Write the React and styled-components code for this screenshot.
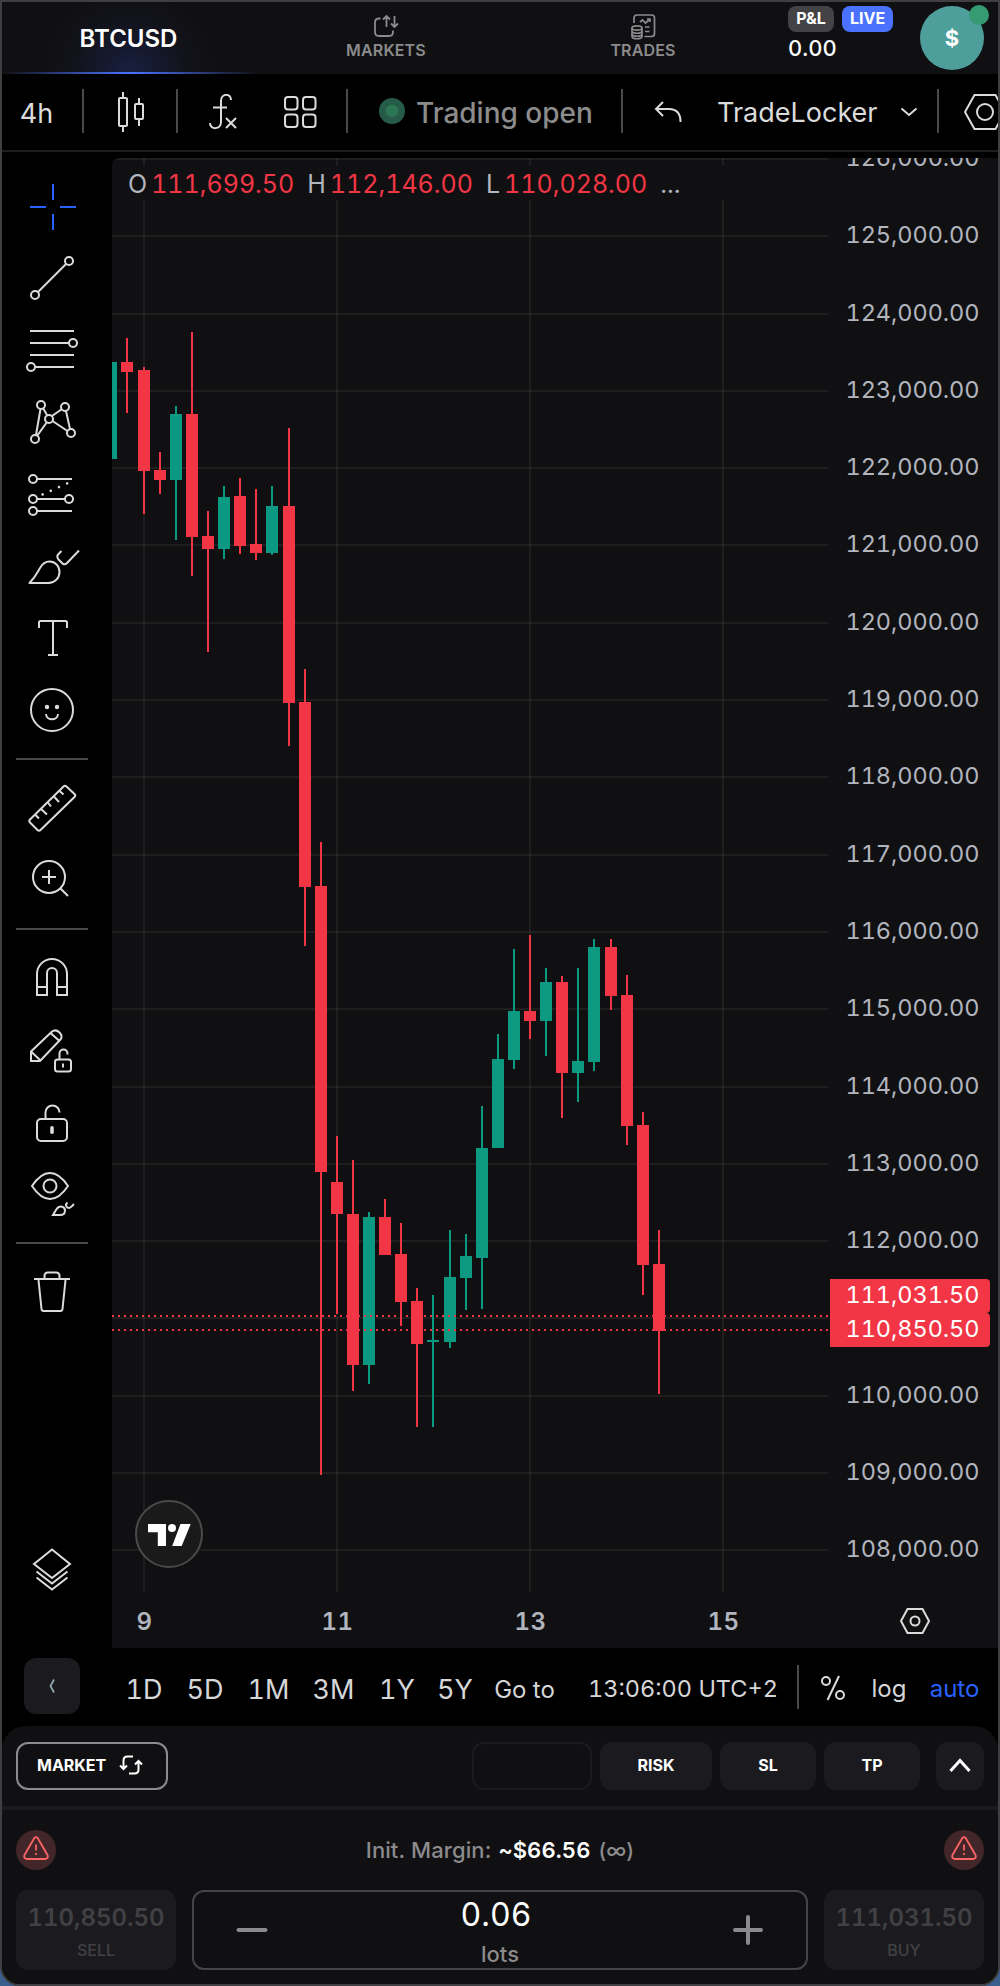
import styled, { createGlobalStyle } from "styled-components"

const GlobalStyle = createGlobalStyle`
    * {
        box-sizing: border-box;
    }
    body {
        margin: 0;
        background: #3b5f8f;
        font-family: Inter, "Liberation Sans", sans-serif;
        -webkit-font-smoothing: antialiased;
    }
    svg {
        display: block;
        flex-shrink: 0;
    }
`

const Frame = styled.div`
    display: flex;
    flex-direction: column;
    width: 1000px;
    height: 1986px;
    overflow: hidden;
    border: 2px solid #3f3f41;
    border-radius: 0 0 20px 20px;
    background: #000;
    color: #dbdbdb;
`

/* ---------- header ---------- */

const Header = styled.header`
    display: flex;
    height: 72px;
    background: #101012;
`

const Tab = styled.div`
    display: flex;
    flex-direction: column;
    align-items: center;
    width: 256px;
    padding-top: 11px;
    padding-left: ${props => props.$start || 0}px;
    color: #8b8b8d;
    font-size: 16px;
    font-weight: 600;
    line-height: 20px;
    letter-spacing: 0.15px;
`

const ActiveTab = styled(Tab)`
    justify-content: center;
    padding: 2px 3px 0 0;
    color: #fff;
    font-size: 24px;
    letter-spacing: 0;
    background:
        linear-gradient(90deg, transparent, #4a72ff 50%, transparent) bottom / 100% 2px no-repeat,
        radial-gradient(circle at 50% 100%, rgba(60, 92, 255, 0.2), rgba(60, 92, 255, 0.04) 55px, transparent 85px);
`

const Pnl = styled.div`
    width: 132px;
    margin-left: 18px;
    padding-top: 4px;
`

const Pills = styled.div`
    display: flex;
    gap: 8px;
`

const Pill = styled.span`
    width: ${props => props.$width}px;
    height: 26px;
    border-radius: 8px;
    background: ${props => props.$bg};
    color: #fff;
    font-size: 16px;
    font-weight: 700;
    line-height: 25px;
    text-align: center;
`

const PnlValue = styled.div`
    color: #fff;
    font-size: 22px;
    font-weight: 500;
    line-height: 33px;
    font-variant-numeric: tabular-nums;
`

const Avatar = styled.div`
    position: relative;
    width: 64px;
    height: 64px;
    margin-top: 4px;
    border-radius: 50%;
    background: #4e9e9c;
    color: #fff;
    font-size: 22px;
    font-weight: 700;
    line-height: 64px;
    text-align: center;
    &::after {
        content: "";
        position: absolute;
        top: -1px;
        right: -5px;
        width: 20px;
        height: 20px;
        border-radius: 50%;
        background: #369a73;
    }
`

/* ---------- chart toolbar ---------- */

const Toolbar = styled.div`
    display: flex;
    align-items: center;
    height: 78px;
    padding-bottom: 2px;
    border-bottom: 2px solid #1d1d20;
    font-size: 27px;
    > * {
        flex-shrink: 0;
    }
`

const Tool = styled.div`
    display: flex;
    justify-content: center;
    align-items: center;
    width: ${props => props.$width}px;
    height: 46px;
    padding-top: ${props => props.$top || 2}px;
    padding-right: ${props => props.$end || 0}px;
    padding-left: ${props => props.$start || 0}px;
`

const Divider = styled.div`
    width: 2px;
    height: 44px;
    background: #4a4a4a;
`

const Status = styled.div`
    display: flex;
    align-items: center;
    gap: 11px;
    width: 273px;
    padding-left: 31px;
    color: #8c8c8c;
    font-size: 28px;
    font-weight: 500;
    white-space: nowrap;
    span {
        padding-top: 4px;
    }
`

const StatusDot = styled.i`
    width: 26px;
    height: 26px;
    border-radius: 50%;
    background: radial-gradient(circle, #2c7656 6px, #265c47 6.5px);
`

const Broker = styled.div`
    display: flex;
    align-items: center;
    justify-content: space-between;
    width: 224px;
    padding: 3px 19px 0 4px;
    font-size: 27px;
    svg {
        margin-bottom: 2px;
    }
`

const Settings = styled.div`
    padding: 1px 0 0 25px;
`

/* ---------- middle ---------- */

const Main = styled.div`
    display: flex;
    height: 1496px;
`

const Sidebar = styled.aside`
    display: flex;
    flex-direction: column;
    width: 110px;
    padding: 18px 0 42px 14px;
`

const SidebarRule = styled.hr`
    width: 72px;
    height: 2px;
    margin: 12px 0;
    border: 0;
    background: #4a4a4a;
`

const IconSvg = styled.svg`
    width: 72px;
    height: 72px;
    fill: none;
    stroke: ${props => props.$color || "#dbdbdb"};
    stroke-width: 2;
    margin-top: ${props => (props.$last ? "auto" : 0)};
`

const ChartArea = styled.section`
    position: relative;
    width: 886px;
    height: 1490px;
    margin-top: 6px;
    overflow: hidden;
    border-top-left-radius: 8px;
    background: #101012;
    font-variant-numeric: tabular-nums;
`

const Legend = styled.div`
    position: absolute;
    top: 8px;
    left: 12px;
    display: flex;
    width: 690px;
    height: 34px;
    padding-left: 4px;
    background: #101012;
    color: #b2b5be;
    font-size: 25px;
    line-height: 36px;
    white-space: pre;
    b {
        color: #f23645;
        font-weight: 400;
        margin: 0 13px 0 4px;
    }
`

/* ---------- range bar ---------- */

const RangeBar = styled.div`
    display: flex;
    align-items: center;
    height: 78px;
    padding: 0 0 0 22px;
`

const Collapse = styled.div`
    display: flex;
    justify-content: center;
    align-items: center;
    width: 56px;
    height: 56px;
    margin: 0 32px 2px 0;
    border-radius: 12px;
    background: #1b1b1f;
`

const Range = styled.div`
    width: ${props => props.$width}px;
    padding-top: ${props => props.$top || 0}px;
    color: ${props => (props.$active ? "#2962ff" : "#d6d6d8")};
    font-size: ${props => props.$size || 24}px;
    line-height: 40px;
    text-align: center;
    white-space: nowrap;
    font-variant-numeric: tabular-nums;
    svg {
        margin: 0 auto;
    }
`

/* ---------- order panel ---------- */

const Panel = styled.div`
    flex: 1;
    border-radius: 24px 24px 0 0;
    background: #101012;
`

const OrderRow = styled.div`
    display: flex;
    align-items: center;
    gap: 8px;
    height: 84px;
    padding: 0 14px;
    border-bottom: 4px solid #1b1b1f;
`

const OrderType = styled.button`
    display: flex;
    align-items: center;
    gap: 13px;
    width: 152px;
    height: 48px;
    margin-right: auto;
    padding: 0 0 2px 19px;
    border: 2px solid #8c8c8e;
    border-radius: 12px;
    background: none;
    color: #fff;
    font: 700 16px Inter, sans-serif;
`

const Chip = styled.button`
    display: flex;
    justify-content: center;
    align-items: center;
    width: ${props => props.$width}px;
    height: 48px;
    margin-left: ${props => (props.$gap ? 8 : 0)}px;
    padding: 0 0 2px;
    border: 2px solid #1b1b1f;
    border-radius: 12px;
    background: ${props => (props.$empty ? "none" : "#1b1b1f")};
    color: #fff;
    font: 700 16px Inter, sans-serif;
`

const MarginRow = styled.div`
    display: flex;
    justify-content: space-between;
    align-items: center;
    height: 80px;
    padding: 0 14px;
`

const Warning = styled.div`
    display: flex;
    justify-content: center;
    align-items: center;
    width: 40px;
    height: 40px;
    padding-bottom: 4px;
    border-radius: 50%;
    background: #432629;
`

const MarginText = styled.p`
    margin: 0;
    color: #8b8b8d;
    font-size: 22px;
    font-weight: 500;
    letter-spacing: 0.1px;
    white-space: pre;
    b {
        margin-left: 1px;
        color: #fff;
        font-weight: 600;
        font-variant-numeric: tabular-nums;
    }
    small {
        margin-left: 2px;
        font-size: 21px;
    }
`

const TradeRow = styled.div`
    display: flex;
    gap: 16px;
    padding: 0 14px;
`

const SideButton = styled.button`
    display: flex;
    flex-direction: column;
    align-items: center;
    width: 160px;
    height: 80px;
    padding: 12px 0 0;
    border: 0;
    border-radius: 12px;
    background: #1b1b1f;
    color: #414143;
    font: 600 24px/31px Inter, sans-serif;
    font-variant-numeric: tabular-nums;
    small {
        font-size: 16px;
        font-weight: 500;
        line-height: 35px;
    }
`

const Lots = styled.div`
    display: flex;
    justify-content: space-between;
    align-items: center;
    flex: 1;
    height: 80px;
    padding: 0 42px;
    border: 2px solid #454547;
    border-radius: 12px;
`

const LotsValue = styled.div`
    display: flex;
    flex-direction: column;
    align-items: center;
    padding-top: 6px;
    color: #fff;
    font-size: 32px;
    line-height: 44px;
    font-variant-numeric: tabular-nums;
    span {
        margin-right: 8px;
    }
    small {
        margin-top: -2px;
        color: #8b8b8d;
        font-size: 22px;
        font-weight: 500;
        line-height: 38px;
    }
`

const Dots = ({ points }) => points.map(([x, y]) => <circle key={`${x}-${y}`} cx={x} cy={y} r="4" />)

const TOOLS = [
    { id: "cross", color: "#2962ff", draw: <path d="M37 14v16M37 44v16M14 37h16M44 37h16" /> },
    {
        id: "trend",
        draw: <><path d="M22 50l28-28" /><Dots points={[[53, 19], [19, 53]]} /></>,
    },
    {
        id: "fib",
        draw: <><path d="M14 17h44M14 29h39M14 41h44M19 53h39" /><Dots points={[[57, 29], [15, 53]]} /></>,
    },
    {
        id: "pattern",
        draw: <>
            <path d="M24.500 23L20 49M27 22l4 7M36 30l10-7M31 36L21 50M36.500 35l15 10M50 25l4 18" />
            <Dots points={[[25, 19], [49, 21], [33, 33], [19, 53], [55, 47]]} />
        </>,
    },
    {
        id: "forecast",
        draw: <>
            <path d="M21 21h35M21 41h28M21 53h35" />
            <path d="M26.500 36.500L53 24.500" strokeWidth="2.600" strokeLinecap="round" strokeDasharray="0.100 8.900" />
            <Dots points={[[17, 21], [17, 41], [53, 41], [17, 53]]} />
        </>,
    },
    {
        id: "brush",
        draw: <>
            <path d="M13.500 53C20 46 21 43 24 38c2.500-4.500 5.500-6.500 9.500-6.500 6 0 10 4.700 10 10.500s-4.500 11-11 11z" strokeLinejoin="round" />
            <path d="M45.500 21l-3 3c-1.500 1.500-1.500 3.500 0 5.500l3.500 3.500c1.500 1.500 3.500 1.500 5 0L63 20.500" />
        </>,
    },
    { id: "text", draw: <path d="M23 26v-5.500q0-1.500 1.500-1.500h25q1.500 0 1.500 1.500V26M37 19v34M32 53h10" /> },
    {
        id: "smile",
        draw: <>
            <circle cx="36" cy="36" r="21" />
            <path d="M30 40c.5 7 11.500 7 12 0" />
            <g fill="#dbdbdb" stroke="none"><circle cx="31" cy="33" r="2.200" /><circle cx="41" cy="33" r="2.200" /></g>
        </>,
    },
    null,
    {
        id: "ruler",
        draw: <>
            <path d="M47.500 14.500q1.500-1.500 3 0l8 7.500q1.500 1.500 0 3L24.500 58q-1.500 1.500-3 0L14 50.500q-1.500-1.500 0-3z" />
            <path d="M43 18.500l4.500 4M37.500 24l5.500 6M31.500 30l3.500 4.500M24.500 36.500l6.500 6M19 42.500l4 4" />
        </>,
    },
    { id: "zoom", draw: <><circle cx="33" cy="33" r="16" /><path d="M26 33h14M33 26v14M44.500 44.500l7.500 7.500" /></> },
    null,
    { id: "magnet", draw: <path d="M21 53V32a15 15 0 0 1 30 0v21H41V31a5 5 0 0 0-10 0v22zM21 45h10M41 45h10" /> },
    {
        id: "pencil-lock",
        draw: <>
            <path d="M15 47V37.500L35.500 18q4-3.500 8 0.500 4 4 0.500 7.500L24 47zM15 37.500l9 8.500M35 19.500l8.500 7.500" />
            <rect x="39" y="45.500" width="16" height="12" rx="2.500" />
            <path d="M43.500 45v-5.500a4 4 0 0 1 8 0v1M47 49.500v4" />
        </>,
    },
    {
        id: "lock",
        draw: <>
            <rect x="21" y="33" width="30" height="22" rx="4" />
            <path d="M29.500 33v-6.500a7 7 0 0 1 14 0" />
            <rect x="34.200" y="40" width="3.600" height="8" rx="1.800" fill="#dbdbdb" stroke="none" />
        </>,
    },
    {
        id: "eye",
        draw: <>
            <path d="M16 28c6-9 12-13 18-13s12 4 18 13c-6 9-12 13-18 13s-12-4-18-13z" />
            <circle cx="34" cy="28" r="6.500" />
            <path d="M37 57c2-3 2.500-4.500 4-6.500 3-3.500 8-2 8 2 0 3-2 4.500-5 4.500zM51.500 44.500c-3 2.500-1 5.500 1.500 5.500 2 0 2.500-1.500 5-4" />
        </>,
    },
    null,
    {
        id: "trash",
        draw: <path d="M18 23h36M28.500 23v-3q0-3.500 3.500-3.500h8q3.500 0 3.500 3.500v3M22.500 24l3 29q.2 2 2 2h17q1.800 0 2-2l3-29" />,
    },
]

// one grid line per 1000 points
const PRICES = [
    [126, 159], [125, 236], [124, 314], [123, 391], [122, 468], [121, 545], [120, 623], [119, 700], [118, 777],
    [117, 855], [116, 932], [115, 1009], [114, 1087], [113, 1164], [112, 1241], [111, 1318], [110, 1396],
    [109, 1473], [108, 1550],
]

const DAYS = [[9, 144], [11, 337], [13, 530], [15, 723]]

// x, high, body top, body bottom, low, rising
const CANDLES = [
    [111, 362, 362, 459, 459, 1],
    [127, 338, 362, 372, 413],
    [144, 367, 370, 471, 514],
    [160, 452, 470, 480, 494],
    [176, 406, 414, 480, 540, 1],
    [192, 332, 414, 537, 576],
    [208, 511, 536, 549, 652],
    [224, 486, 497, 549, 559, 1],
    [240, 478, 496, 546, 554],
    [256, 489, 544, 553, 560],
    [272, 486, 506, 553, 555, 1],
    [289, 428, 506, 703, 746],
    [305, 669, 702, 887, 946],
    [321, 842, 886, 1172, 1475],
    [337, 1136, 1182, 1214, 1314],
    [353, 1160, 1214, 1365, 1391],
    [369, 1212, 1217, 1365, 1384, 1],
    [385, 1199, 1217, 1255, 1255],
    [401, 1223, 1254, 1302, 1326],
    [417, 1288, 1301, 1344, 1427],
    [433, 1295, 1340, 1342, 1427, 1],
    [450, 1230, 1277, 1342, 1348, 1],
    [466, 1234, 1256, 1278, 1310, 1],
    [482, 1106, 1148, 1258, 1309, 1],
    [498, 1034, 1059, 1148, 1148, 1],
    [514, 949, 1011, 1060, 1069, 1],
    [530, 935, 1011, 1021, 1039],
    [546, 968, 982, 1021, 1056, 1],
    [562, 976, 982, 1073, 1118],
    [578, 968, 1061, 1073, 1102, 1],
    [594, 939, 947, 1062, 1071, 1],
    [611, 939, 947, 996, 1010],
    [627, 975, 995, 1126, 1145],
    [643, 1112, 1125, 1265, 1295],
    [659, 1230, 1264, 1331, 1394],
]

const Chart = () => (
    <svg width="886" height="1490" viewBox="112 158 886 1490" fontSize="24">
        <g stroke="#fff" strokeOpacity="0.06" strokeWidth="2">
            {PRICES.map(([price, y]) => <path key={price} d={`M112 ${y}H828`} />)}
            {DAYS.map(([day, x]) => <path key={day} d={`M${x} 158V1592`} />)}
        </g>
        {CANDLES.map(([x, high, top, bottom, low, up]) => (
            <g key={x} fill={up ? "#0c9981" : "#f23645"}>
                <rect x={x - 1} y={high} width="2" height={low - high} />
                <rect x={x - 6} y={top} width="12" height={bottom - top} />
            </g>
        ))}
        <path d="M112 1316H828M112 1330H828" stroke="#f23645" strokeWidth="2" strokeDasharray="2 4" />
        <g fill="#b2b5be" fontSize="23.500" textAnchor="end">
            {PRICES.filter(([price]) => price !== 111).map(([price, y]) => (
                <text key={price} x="979.500" y={y + 7} textLength="134">{price},000.00</text>
            ))}
        </g>
        <path d="M830 1279h156q4 0 4 4v26q0 4-4 4 4 0 4 4v26q0 4-4 4H830z" fill="#f23645" />
        <g fill="#fff" fontSize="23.500" textAnchor="end">
            <text x="979.500" y="1303" textLength="134">111,031.50</text>
            <text x="979.500" y="1337" textLength="134">110,850.50</text>
        </g>
        <g fill="#b2b5be" fontWeight="600" letterSpacing="0.500" textAnchor="middle">
            {DAYS.map(([day, x]) => <text key={day} x={x + 0.5} y="1630">{day}</text>)}
        </g>
        <g fill="none" stroke="#dbdbdb" strokeWidth="2">
            <path d="M907.500 1609h15l6.500 12-6.500 12h-15l-6.500-12z" />
            <circle cx="915" cy="1621" r="4.500" />
        </g>
        <circle cx="169" cy="1534" r="33" fill="#1a1a1b" stroke="#4a4a4a" strokeWidth="2" />
        <g fill="#fff">
            <path d="M148 1524h18v22h-8.200v-13.700H148zM180.500 1524h10.200l-9 22h-9.500z" />
            <circle cx="172" cy="1528" r="4" />
        </g>
    </svg>
)

const WarningIcon = () => (
    <Warning>
        <svg width="26" height="24" viewBox="0 0 26 24" fill="none" stroke="#ff6464" strokeWidth="1.800">
            <path d="M11.200 2.200Q13 0 14.800 2.200L24.500 19q1.200 3.500-2.500 4H4q-3.700-.5-2.500-4z" strokeLinejoin="round" />
            <path d="M13 8.500v6M13 17v2" />
        </svg>
    </Warning>
)

const App = () => {
    return <Frame>
        <GlobalStyle />
        <Header>
            <ActiveTab>BTCUSD</ActiveTab>
            <Tab>
                <svg width="26" height="27" viewBox="0 0 26 27" fill="none" stroke="#8b8b8d" strokeWidth="1.800">
                    <path d="M7.500 5.500H6q-4 0-4 4V19q0 4 4 4h10q4 0 4-4v-1.500M13.500 14V3.500M10 6.500L13.500 3 17 6.500M21.500 3v10.500M18 10.500l3.500 3.500 3.500-3.500" />
                </svg>
                MARKETS
            </Tab>
            <Tab $start={2}>
                <svg width="26" height="27" viewBox="0 0 26 27" fill="none" stroke="#8b8b8d" strokeWidth="1.700">
                    <path d="M4 10V5q0-3 3-3h14.500q3 0 3 3v15.500q0 3-3 3H14.500" />
                    <path d="M10 9l2.500-2 3 3 4-3.500M17 6h3v3M15 14h4.500M15 18.500h4.500" />
                    <ellipse cx="7" cy="15" rx="5" ry="2.200" />
                    <path d="M2 15v8.500c0 3 10 3 10 0V15M2 18c0 3 10 3 10 0M2 21c0 3 10 3 10 0" />
                </svg>
                TRADES
            </Tab>
            <Pnl>
                <Pills>
                    <Pill $width={46} $bg="#434345">P&amp;L</Pill>
                    <Pill $width={51} $bg="#4a72ff">LIVE</Pill>
                </Pills>
                <PnlValue>0.00</PnlValue>
            </Pnl>
            <Avatar>$</Avatar>
        </Header>

        <Toolbar>
            <Tool $width={80} $end={11} $top={4}>4h</Tool>
            <Divider />
            <Tool $width={92} $start={2}>
                <svg width="26" height="40" viewBox="0 0 26 40" fill="none" stroke="#dbdbdb" strokeWidth="2">
                    <path d="M5 0v6M5 34v6M21 6v6M21 28v6" />
                    <rect x="1" y="6" width="8" height="28" rx="1" />
                    <rect x="17" y="12" width="8" height="15" rx="1" />
                </svg>
            </Tool>
            <Divider />
            <Tool $width={90}>
                <svg width="28" height="36" viewBox="0 0 28 36" fill="none" stroke="#dbdbdb" strokeWidth="2">
                    <path d="M22 6c0-7-10-7-10 1v21c0 8-11 8-11 1M4 13.500h14M17 24l10 10M27 24L17 34" />
                </svg>
            </Tool>
            <Tool $width={78} $end={14}>
                <svg width="34" height="34" viewBox="0 0 34 34" fill="none" stroke="#dbdbdb" strokeWidth="2">
                    <rect x="2" y="2" width="12.500" height="12.500" rx="3" />
                    <rect x="20" y="2" width="12.500" height="12.500" rx="3" />
                    <rect x="2" y="19.500" width="12.500" height="12.500" rx="3" />
                    <rect x="20" y="19.500" width="12.500" height="12.500" rx="3" />
                </svg>
            </Tool>
            <Divider />
            <Status><StatusDot /><span>Trading open</span></Status>
            <Divider />
            <Tool $width={90}>
                <svg width="28" height="22" viewBox="0 0 28 22" fill="none" stroke="#dbdbdb" strokeWidth="2">
                    <path d="M9 1L2 8l7 7M2 8h13c8 0 11.500 5 11.500 13" />
                </svg>
            </Tool>
            <Broker>
                TradeLocker
                <svg width="18" height="10" viewBox="0 0 18 10" fill="none" stroke="#dbdbdb" strokeWidth="2">
                    <path d="M1.500 1.500L9 8l7.500-6.500" />
                </svg>
            </Broker>
            <Divider />
            <Settings>
                <svg width="42" height="36" viewBox="0 0 42 36" fill="none" stroke="#dbdbdb" strokeWidth="2">
                    <path d="M10.500 1h21L41 18l-9.500 17h-21L1 18z" />
                    <circle cx="21" cy="18" r="8" />
                </svg>
            </Settings>
        </Toolbar>

        <Main>
            <Sidebar>
                {TOOLS.map((tool, i) => tool
                    ? <IconSvg key={tool.id} viewBox="0 0 72 72" $color={tool.color}>{tool.draw}</IconSvg>
                    : <SidebarRule key={i} />
                )}
                <IconSvg viewBox="0 0 72 72" $last>
                    <path d="M36 15.500L54 30 36 44 18 30zM20.500 37.500L36 49.500l15.500-12M20.500 43.500L36 55.500l15.500-12" />
                </IconSvg>
            </Sidebar>
            <ChartArea>
                <Chart />
                <Legend>
                    O<b>111,699.50</b>H<b>112,146.00</b>L<b>110,028.00</b>...
                </Legend>
            </ChartArea>
        </Main>

        <RangeBar>
            <Collapse>
                <svg width="6" height="14" viewBox="0 0 6 14" fill="none" stroke="#8fa5ad" strokeWidth="1.800">
                    <path d="M5 .5L1.500 7 5 13.500" />
                </svg>
            </Collapse>
            <Range $width={64} $size={27} $top={5}>1D</Range>
            <Range $width={58} $size={27} $top={5}>5D</Range>
            <Range $width={69} $size={27} $top={5}>1M</Range>
            <Range $width={61} $size={27} $top={5}>3M</Range>
            <Range $width={66} $size={27} $top={5}>1Y</Range>
            <Range $width={50} $size={27} $top={5}>5Y</Range>
            <Range $width={89} $top={6}>Go to</Range>
            <Range $width={228} $size={23.5} $top={4}>13:06:00 UTC+2</Range>
            <Divider />
            <Range $width={68} $top={1}>
                <svg width="26" height="28" viewBox="0 0 26 28" fill="none" stroke="#dbdbdb" strokeWidth="2">
                    <circle cx="6" cy="7" r="4" />
                    <circle cx="20" cy="21" r="4" />
                    <path d="M19 2L7.500 26" />
                </svg>
            </Range>
            <Range $width={44} $top={4}>log</Range>
            <Range $width={87} $top={4} $active>auto</Range>
        </RangeBar>

        <Panel>
            <OrderRow>
                <OrderType>
                    MARKET
                    <svg width="25" height="20" viewBox="0 0 25 20" fill="none" stroke="#fff" strokeWidth="2">
                        <path d="M14 1.500H8.500q-4 0-4 4V14M1 10.500l3.500 3.500L8 10.500M10 18.500h5.500q4 0 4-4V6M16 9.500L19.500 6 23 9.500" />
                    </svg>
                </OrderType>
                <Chip $width={120} $empty />
                <Chip $width={112}>RISK</Chip>
                <Chip $width={96}>SL</Chip>
                <Chip $width={96}>TP</Chip>
                <Chip $width={48} $gap>
                    <svg width="22" height="14" viewBox="0 0 22 14" fill="none" stroke="#fff" strokeWidth="3">
                        <path d="M1.500 13L11 2.500 20.500 13" />
                    </svg>
                </Chip>
            </OrderRow>
            <MarginRow>
                <WarningIcon />
                <MarginText>Init. Margin: <b>~$66.56</b> <small>(∞)</small></MarginText>
                <WarningIcon />
            </MarginRow>
            <TradeRow>
                <SideButton>110,850.50<small>SELL</small></SideButton>
                <Lots>
                    <svg width="32" height="32" viewBox="0 0 32 32" stroke="#8b8b8d" strokeWidth="4" strokeLinecap="round">
                        <path d="M2.500 16h27" />
                    </svg>
                    <LotsValue><span>0.06</span><small>lots</small></LotsValue>
                    <svg width="32" height="32" viewBox="0 0 32 32" stroke="#8b8b8d" strokeWidth="4" strokeLinecap="round">
                        <path d="M3 16h26M16 3v26" />
                    </svg>
                </Lots>
                <SideButton>111,031.50<small>BUY</small></SideButton>
            </TradeRow>
        </Panel>
    </Frame>
}

export default App
